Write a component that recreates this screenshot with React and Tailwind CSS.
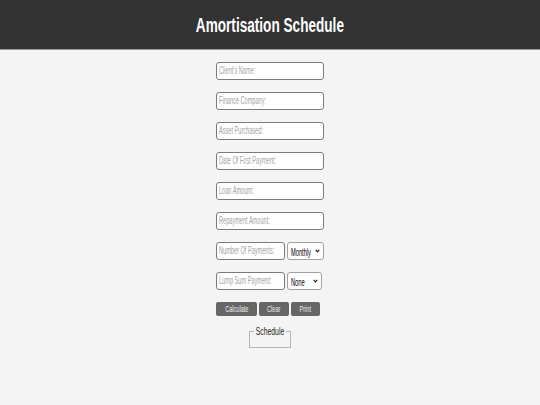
import React from "react";

const font = { fontFamily: '"Liberation Sans", Arial, sans-serif' };

function Field({ label, w = "w-[108px]" }) {
  return (
    <div className={`${w} h-[18px] bg-white border border-[#7a7a7a] rounded-[3px] flex items-center pl-[2px] overflow-hidden`}>
      <span className="inline-block origin-left scale-x-[0.56] text-[10px] leading-none text-[#a3a3a3] whitespace-nowrap">
        {label}
      </span>
    </div>
  );
}

function Select({ value, w }) {
  return (
    <div className={`${w} h-[18px] bg-white border border-[#a0a0a0] rounded-[3px] flex items-center pl-[3px] pr-[3px] overflow-hidden`}>
      <div className="w-[22px] shrink-0 overflow-visible">
        <span className="inline-block origin-left scale-x-[0.57] text-[10px] leading-none text-black whitespace-nowrap">
          {value}
        </span>
      </div>
      <svg width="5" height="4" viewBox="0 0 5 4" className="shrink-0 ml-auto">
        <path d="M0.7 0.9 L2.5 2.8 L4.3 0.9" fill="none" stroke="#222" strokeWidth="1.2" />
      </svg>
    </div>
  );
}

function Btn({ label, w }) {
  return (
    <div className={`${w} h-[14px] bg-[#666666] rounded-[2px] flex items-center justify-center overflow-visible`}>
      <span className="inline-block origin-center scale-x-[0.62] text-[9px] leading-none text-[#eeeeee] whitespace-nowrap">
        {label}
      </span>
    </div>
  );
}

export default function App() {
  return (
    <div className="w-[540px] h-[405px] bg-[#f4f4f4] overflow-hidden" style={font}>
      <header className="h-[50px] bg-[#333333] border-b border-[#9a9a9a] flex items-center justify-center">
        <h1 className="inline-block origin-center scale-x-[0.68] text-[20px] font-bold text-white leading-none whitespace-nowrap mt-[1px]">
          Amortisation Schedule
        </h1>
      </header>
      <div className="flex flex-col items-center pt-[12px]">
        <div className="w-[108px] flex flex-col gap-[12px]">
          <Field label="Client's Name:" />
          <Field label="Finance Company:" />
          <Field label="Asset Purchased:" />
          <Field label="Date Of First Payment:" />
          <Field label="Loan Amount:" />
          <Field label="Repayment Amount:" />
          <div className="flex gap-[2px]">
            <Field label="Number Of Payments:" w="w-[69px]" />
            <Select value="Monthly" w="w-[37px]" />
          </div>
          <div className="flex gap-[2px]">
            <Field label="Lump Sum Payment:" w="w-[69px]" />
            <Select value="None" w="w-[35px]" />
          </div>
          <div className="flex gap-[2px]">
            <Btn label="Calculate" w="w-[41px]" />
            <Btn label="Clear" w="w-[30px]" />
            <Btn label="Print" w="w-[29px]" />
          </div>
        </div>
        <fieldset className="mt-[9px] w-[42px] h-[23px] border border-[#b5b5b5]">
          <legend className="mx-auto w-[32px] text-[11px] leading-[12px] text-[#222]">
            <span className="block w-[46px] -ml-[7px] text-center scale-x-[0.62] origin-center whitespace-nowrap">
              Schedule
            </span>
          </legend>
        </fieldset>
      </div>
    </div>
  );
}
